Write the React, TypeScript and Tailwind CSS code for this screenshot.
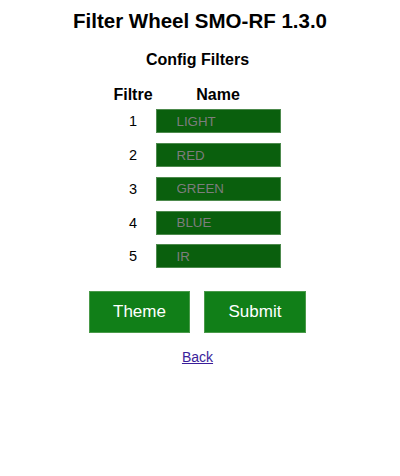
const filters = ["LIGHT", "RED", "GREEN", "BLUE", "IR"];

function FilterRow({ index, name }: { index: number; name: string }) {
  return (
    <>
      <div className="flex h-[33.75px] items-center justify-center text-[14.5px] leading-[18px]">
        {index}
      </div>
      <div className="flex h-[33.75px] items-center justify-center">
        <input
          defaultValue={name}
          className="h-[24px] w-[125px] border border-[#4d8a4d] bg-[#0a5f0d] pl-[20px] text-[13.33px] text-[#7d7d7d] outline-none"
        />
      </div>
    </>
  );
}

export default function App() {
  return (
    <div
      className="min-h-[476px] w-[400px] bg-white text-black"
      style={{ fontFamily: '"Liberation Sans", Arial, sans-serif' }}
    >
      <h2 className="pt-[9px] text-center text-[20.5px] font-bold leading-[24px]">
        Filter Wheel SMO-RF 1.3.0
      </h2>

      <div className="pr-[5px]">
        <h3 className="mt-[17.5px] text-center text-[16px] font-bold leading-[18px]">
          Config Filters
        </h3>

        <div className="mt-[17px] flex justify-center">
          <div className="grid grid-cols-[41px_129px]">
            <div className="mb-[1px] text-center text-[16px] font-bold leading-[18px]">Filtre</div>
            <div className="mb-[1px] text-center text-[16px] font-bold leading-[18px]">Name</div>
            {filters.map((f, i) => (
              <FilterRow key={f} index={i + 1} name={f} />
            ))}
          </div>
        </div>

        <div className="mt-[17.3px] flex justify-center gap-[14px]">
          <button className="h-[42px] w-[101px] border border-[#4a9a4a] bg-[#117f18] text-[17px] text-white">
            Theme
          </button>
          <button className="h-[42px] w-[102px] border border-[#4a9a4a] bg-[#117f18] text-[17px] text-white">
            Submit
          </button>
        </div>

        <div className="mt-[16.5px] text-center text-[14px] leading-[16px]">
          <a href="#" className="text-[#3a1d9a] underline">
            Back
          </a>
        </div>
      </div>
    </div>
  );
}
